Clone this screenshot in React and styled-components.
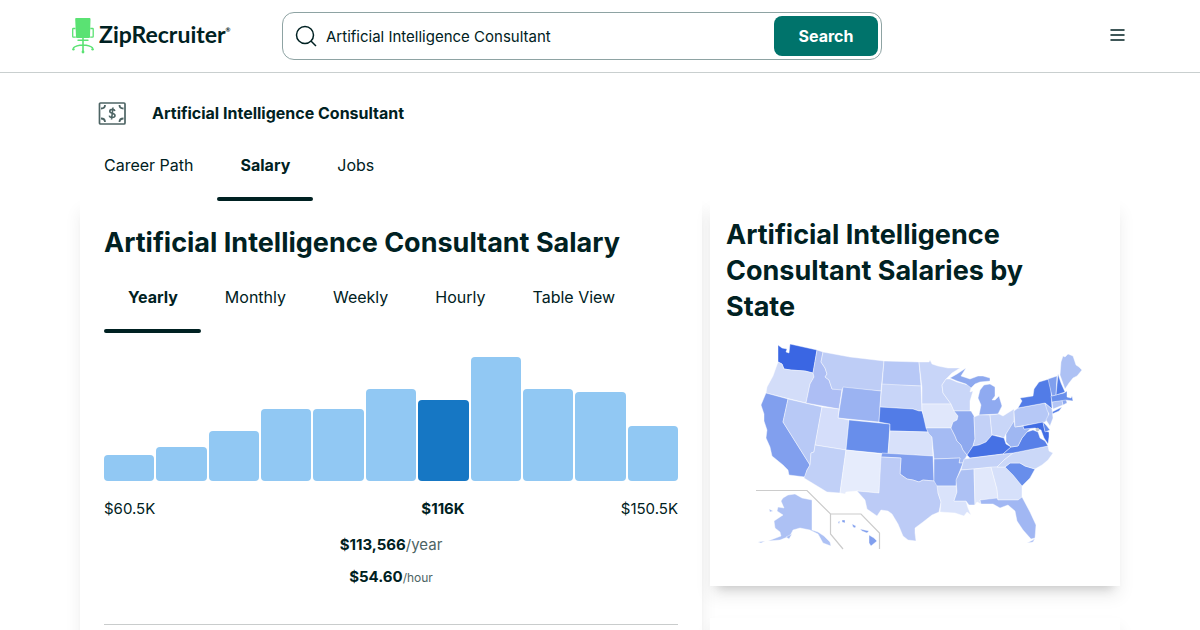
import React from "react";
import styled, { createGlobalStyle } from "styled-components";

const ink = "#002122";
const font = `Inter, "Liberation Sans", sans-serif`;

const GlobalStyle = createGlobalStyle`
  *, *::before, *::after { box-sizing: border-box; }
  body {
    margin: 0;
    background: #fff;
    color: ${ink};
    font: 400 16px/24px ${font};
  }
  h1, h2, p, ul { margin: 0; padding: 0; }
  ul { list-style: none; }
  a { color: inherit; text-decoration: none; }
  button, input { font: inherit; color: inherit; }
`;

const Header = styled.header`
  display: flex;
  align-items: center;
  height: 73px;
  padding: 0 72px;
  border-bottom: 1px solid #c9cfcf;
`;

const Logo = styled.a`
  display: flex;
  align-items: flex-start;
  gap: 5px;
  width: 210px;
  flex: none;
  svg { flex: none; }
`;

const Wordmark = styled.span`
  display: flex;
  font: 700 23px/32px Lato, ${font};
  sup { font-size: 6px; line-height: 8px; margin-top: 8px; }
`;

const SearchForm = styled.form`
  display: flex;
  align-items: center;
  flex: 0 1 600px;
  height: 48px;
  padding: 3px;
  border: 1px solid #8ea3a3;
  border-radius: 12px;
`;

const SearchLabel = styled.label`
  display: flex;
  align-items: center;
  gap: 9px;
  flex: 1;
  min-width: 0;
  padding-left: 9px;
  svg { flex: none; }
`;

const SearchInput = styled.input`
  flex: 1;
  min-width: 0;
  height: 40px;
  padding: 0;
  border: 0;
  outline: 0;
  background: none;
  font-size: 15px;
`;

const SearchButton = styled.button`
  width: 104px;
  height: 40px;
  padding: 0;
  border: 0;
  border-radius: 8px;
  background: #00736b;
  color: #fff;
  font-weight: 700;
`;

const MenuButton = styled.button`
  display: flex;
  margin-left: auto;
  padding: 0 0 2px;
  border: 0;
  background: none;
`;

const Page = styled.div`
  max-width: 1040px;
  margin: 0 auto;
`;

const SubHeader = styled.div`
  position: relative;
  z-index: 1;
  padding-top: 24px;
  background: #fff;
`;

const TopicTitle = styled.p`
  display: flex;
  align-items: center;
  gap: 26px;
  height: 32px;
  padding-left: 18px;
  font-weight: 700;
`;

const TabList = styled.ul`
  display: flex;
`;

const Tab = styled.a`
  display: block;
  position: relative;
  height: 72px;
  padding: 24px 23px 0 24px;
  font-weight: ${(p) => (p.$active ? 700 : 400)};
  &::after {
    content: "";
    position: absolute;
    left: 0;
    right: 0;
    bottom: 0;
    height: 4px;
    border-radius: 2px;
    background: ${(p) => (p.$active ? ink : "transparent")};
  }
`;

const Columns = styled.main`
  display: grid;
  grid-template-columns: minmax(0, 622fr) minmax(0, 410fr);
  gap: 8px;
`;

const Card = styled.section`
  min-height: 96px;
  padding: ${(p) => p.$pad};
  background: #fff;
  box-shadow: 0 10px 10px -8px rgba(0, 0, 0, 0.18), 0 10px 16px rgba(0, 0, 0, 0.07);
`;

const Side = styled.aside`
  display: flex;
  flex-direction: column;
  gap: 32px;
`;

const Heading = styled.h2`
  padding-right: 16px;
  font-size: 27px;
  line-height: 36px;
  font-weight: 700;
`;

const Chart = styled.div`
  display: flex;
  align-items: flex-end;
  gap: 2px;
  height: 124px;
  margin-top: 24px;
`;

const Bar = styled.div`
  flex: 1;
  border-radius: 4px;
  background: ${(p) => (p.$active ? "#1677c4" : "#91c8f3")};
`;

const Axis = styled.div`
  display: grid;
  grid-template-columns: 314px 50px 1fr;
  margin-top: 16px;
  font-size: 15px;
  strong { text-align: center; }
  span:last-child { text-align: right; }
`;

const Pay = styled.p`
  margin-top: ${(p) => p.$gap}px;
  text-align: center;
  color: #4d6464;
  font-size: ${(p) => p.$unit}px;
  line-height: 24px;
  strong { color: ${ink}; font-size: ${(p) => p.$amount}px; }
`;

const Rule = styled.hr`
  height: 1px;
  margin: 34px 0 0;
  border: 0;
  background: #c9cccc;
`;

const MapDrawing = styled.svg`
  display: block;
  width: 100%;
  margin-top: 9px;
`;

const bars = [26, 34, 50, 72, 72, 92, 81, 124, 92, 89, 55];

const states = [
  ["WA", "#3a66e3", "778,345 782,348 787,349 786,352 789,353 790,344 817,350 813,373 805,371 791,370 784,369 782,364 778,362"],
  ["OR", "#d3ddf9", "778,362 782,364 784,369 791,370 805,371 813,373 814,377 810,384 806,403 766,393 767,387 773,376"],
  ["CA", "#819fee", "766,393 788,399 783,422 810,465 807,470 805,477 789,475 788,470 783,465 772,456 770,447 766,438 767,430 764,421 764,414 761,405"],
  ["NV", "#b8c9f6", "788,399 822,407 815,446 814,452 811,453 810,465 783,422"],
  ["ID", "#adbef4", "817,350 823,352 821,362 825,368 827,374 825,377 829,380 832,389 842,389 839,409 806,403 810,384 814,377 813,373"],
  ["MT", "#becdf6", "823,352 850,357 884,361 881,391 843,388 842,390 832,389 829,380 825,377 827,374 825,368 821,362"],
  ["WY", "#9bb3f2", "843,387 881,391 879,422 838,418"],
  ["UT", "#d5defa", "822,407 839,409 838,418 849,420 846,450 815,445"],
  ["CO", "#688eeb", "849,420 890,424 888,454 846,450"],
  ["AZ", "#c1d0f7", "815,445 846,450 840,493 827,492 804,478 807,470 810,465 811,453 814,452"],
  ["NM", "#e6ecfc", "846,450 882,454 879,493 857,491 846,492 845,494 840,493"],
  ["ND", "#b7c8f6", "884,361 919,362 921,386 882,385"],
  ["SD", "#c8d5f8", "882,384 921,386 922,411 919,411 913,409 880,407"],
  ["NE", "#527ce7", "880,407 913,409 919,411 922,411 925,420 928,432 890,431 890,424 879,422"],
  ["KS", "#d8e1fa", "890,431 928,432 932,437 933,456 888,454"],
  ["OK", "#819fee", "882,453 933,456 934,481 923,480 919,482 913,480 907,479 900,474 901,458 881,457"],
  ["TX", "#bccbf6", "881,457 901,458 900,474 907,479 913,480 919,482 923,480 934,481 938,483 938,493 941,502 939,512 932,515 923,522 915,528 915,533 916,541 908,540 903,536 898,524 892,514 888,511 881,510 877,516 867,509 865,500 857,491 879,493"],
  ["MN", "#c8d5f8", "919,362 929,362 930,360 932,364 938,366 948,368 960,368 952,373 946,379 942,385 943,393 951,404 922,404 922,388"],
  ["IA", "#e0e7fb", "922,404 951,404 954,411 958,416 957,420 953,422 951,428 926,428 922,410"],
  ["MO", "#a5bbf3", "926,428 951,428 955,436 957,441 961,445 963,450 967,455 963,463 959,463 960,458 934,459 932,437 929,434"],
  ["AR", "#8da9f0", "934,459 960,458 959,463 963,463 957,478 956,486 937,486 934,481"],
  ["LA", "#dae3fb", "937,486 956,486 957,492 954,501 966,501 968,508 971,515 967,512 964,516 955,513 940,512 941,502 938,493"],
  ["WI", "#c9d6f8", "946,379 950,379 957,382 968,385 971,388 970,392 973,391 970,401 970,411 954,411 951,404 943,393 942,385"],
  ["IL", "#8ea9ef", "954,411 971,411 974,416 975,439 973,446 967,455 963,450 961,445 957,441 955,436 951,428 953,422 957,420 958,416"],
  ["MIU", "#8ea9ef", "950,378 957,374 966,368 961,376 970,379 978,376 983,376 990,378 990,381 980,382 975,384 971,388 966,384 957,381"],
  ["MI", "#8faaf0", "984,385 990,384 995,387 995,396 992,400 995,400 999,396 1002,406 998,414 979,415 981,405 978,398 980,390"],
  ["IN", "#c3d1f7", "974,417 979,415 990,415 992,435 986,442 979,445 973,446 975,439"],
  ["OH", "#c9d6f8", "990,415 999,414 1003,416 1014,409 1014,422 1006,434 1004,438 999,436 992,435"],
  ["KY", "#4671e4", "967,455 973,446 979,445 986,442 992,435 1004,438 1006,444 1011,447 1003,454 970,458"],
  ["TN", "#c4d2f7", "964,459 1003,454 1013,453 1004,460 997,467 961,470"],
  ["MS", "#adc1f4", "961,470 974,469 975,505 969,505 966,501 954,501 957,492 956,480"],
  ["AL", "#e1e8fb", "974,469 991,467 997,489 998,499 980,500 981,504 977,502 975,505"],
  ["GA", "#d6e0fa", "991,467 1005,467 1013,475 1022,486 1022,498 1018,500 998,500 997,489"],
  ["FL", "#a1b7f3", "980,500 997,498 998,500 1018,500 1022,497 1030,512 1036,525 1035,538 1031,539 1023,530 1017,521 1015,511 1008,505 1000,508 993,504 981,504"],
  ["FLK", "#a1b7f3", "1027,543 1033,540 1035,538 1033,542"],
  ["SC", "#688eeb", "1005,467 1010,463 1020,463 1025,466 1035,469 1030,478 1022,486 1013,475"],
  ["NC", "#cbd8f8", "1013,453 1048,446 1049,451 1053,453 1048,460 1042,465 1035,469 1025,466 1020,463 1010,463 1005,467 997,467 1004,460"],
  ["VA", "#5880e8", "1003,454 1011,447 1018,446 1022,438 1027,432 1033,430 1038,432 1040,438 1045,441 1048,446 1013,453"],
  ["WV", "#9fb7f2", "1014,421 1015,427 1023,426 1024,429 1031,428 1027,432 1022,438 1018,446 1011,447 1006,442 1006,434"],
  ["PA", "#b6c8f6", "1014,411 1018,408 1045,403 1048,410 1049,417 1045,422 1015,427"],
  ["NY", "#527ce7", "1018,408 1022,401 1020,398 1033,396 1034,389 1039,382 1049,379 1051,390 1052,409 1045,403"],
  ["LI", "#527ce7", "1052,412 1062,407 1059,411 1052,414"],
  ["NJ", "#b4c6f5", "1045,403 1052,409 1053,418 1050,426 1046,420 1049,414 1047,410"],
  ["MD", "#416de4", "1023,426 1043,422 1045,431 1049,432 1049,437 1048,444 1044,438 1041,430 1035,428 1024,429"],
  ["DE", "#6188e9", "1043,422 1046,425 1050,430 1045,432"],
  ["CT", "#b3c5f5", "1052,402 1062,400 1063,405 1053,409"],
  ["RI", "#8ca8ef", "1062,400 1066,399 1067,403 1063,405"],
  ["MA", "#688eeb", "1051,396 1064,393 1067,391 1067,397 1071,398 1072,396 1073,401 1066,400 1052,402"],
  ["VT", "#809fee", "1048,379 1057,376 1056,395 1052,396"],
  ["NH", "#527ce7", "1058,374 1061,383 1065,392 1056,395"],
  ["ME", "#adc1f4", "1060,375 1061,362 1063,356 1065,357 1068,354 1073,356 1076,365 1079,367 1082,370 1077,376 1073,378 1069,383 1065,389"],
  ["AK", "#adc1f4", "783,498 788,495 795,494 802,498 812,500 812,530 818,532 824,536 830,542 831,546 823,543 818,534 810,530 800,528 793,530 790,536 780,540 768,541 781,536 780,532 775,528 774,521 783,515 777,511 778,507 784,508 781,501"],
  ["AK2", "#a5bbf3", "758,542 765,541 761,543"],
  ["AK3", "#a5bbf3", "769,509 773,511 770,512"],
  ["AK4", "#a5bbf3", "786,537 792,534 789,539"],
  ["HI1", "#819fee", "838,522 840,521 839,524"],
  ["HI2", "#819fee", "842,520 845,520 845,523 842,522"],
  ["HI3", "#819fee", "852,524 856,526 855,528 853,527"],
  ["HI4", "#819fee", "860,529 869,531 867,533 862,531"],
  ["HI5", "#819fee", "869,535 874,538 877,541 871,546 869,543"],
];

const mainTabs = ["Career Path", "Salary", "Jobs"];
const periodTabs = ["Yearly", "Monthly", "Weekly", "Hourly", "Table View"];

function Tabs({ items, active }) {
  return (
    <TabList>
      {items.map((t) => (
        <li key={t}>
          <Tab href="#" $active={t === active}>
            {t}
          </Tab>
        </li>
      ))}
    </TabList>
  );
}

function ChairIcon() {
  return (
    <svg width="22" height="36" viewBox="0 0 22 36" fill="none" stroke="#5ae273" aria-hidden="true">
      <path d="M4.300 0h13c.8 0 1.200.4 1.200 1.200L18 18.800c0 .8-.4 1.200-1.200 1.200H5.200C4.400 20 4 19.600 4 18.800L3.200 1.200C3.200.4 3.500 0 4.300 0Z" fill="#5ae273" stroke="none" />
      <path d="M3.500 10.500H1.200c-.4 0-.5.2-.5.600v7.400c0 .4.300.6.700.6h2.400M18.300 10.500h2.300c.4 0 .6.200.6.600v7.400c0 .4-.3.600-.7.600h-2.300" strokeWidth="1.300" />
      <path d="M6 22.200h10" strokeWidth="1.400" strokeLinecap="round" />
      <path d="M11 20v13M11 27c-4 .1-7.500.8-9.800 3M11 27c4 .1 7.500.8 9.800 3" strokeWidth="1.600" />
      <circle cx="1.400" cy="31.200" r="1.200" fill="#5ae273" stroke="none" />
      <circle cx="20.600" cy="31.200" r="1.200" fill="#5ae273" stroke="none" />
      <circle cx="11" cy="34" r="1.400" fill="#5ae273" stroke="none" />
    </svg>
  );
}

function MoneyIcon() {
  return (
    <svg width="28" height="24" viewBox="0 0 28 24" fill="none" stroke="#4d6464" strokeWidth="1.700" aria-hidden="true">
      <rect x="1.500" y="2" width="25.500" height="21" rx="1" />
      <path d="M3 7.500c2.500 0 4-1.300 4-3.500M25.500 7.500c-2.500 0-4-1.300-4-3.500M3 17.500c2.500 0 4 1.300 4 3.500M25.500 17.500c-2.500 0-4 1.300-4 3.500" strokeWidth="1.800" />
      <path d="M16.900 10c-.3-1.100-1.200-1.600-2.600-1.600-1.500 0-2.500.7-2.500 1.900 0 2.800 5.200 1.300 5.200 4.200 0 1.300-1.100 2-2.800 2-1.500 0-2.600-.6-2.900-1.900M15 6.500l-1.500 12" strokeWidth="1.600" />
    </svg>
  );
}

export default function App() {
  return (
    <>
      <GlobalStyle />
      <Header>
        <Logo href="#">
          <ChairIcon />
          <Wordmark>
            ZipRecruiter<sup>®</sup>
          </Wordmark>
        </Logo>
        <SearchForm onSubmit={(e) => e.preventDefault()}>
          <SearchLabel>
            <svg width="22" height="22" viewBox="0 0 22 22" fill="none" stroke={ink} strokeWidth="1.500" aria-hidden="true">
              <circle cx="10" cy="10" r="8.500" />
              <path d="m16 16 5 5" />
            </svg>
            <SearchInput aria-label="Search jobs" defaultValue="Artificial Intelligence Consultant" />
          </SearchLabel>
          <SearchButton type="submit">Search</SearchButton>
        </SearchForm>
        <MenuButton type="button" aria-label="Menu">
          <svg width="20" height="20" viewBox="0 0 20 20" stroke={ink} strokeWidth="1.500" strokeLinecap="round">
            <path d="M3 5h13M3 10h13M3 15h13" />
          </svg>
        </MenuButton>
      </Header>
      <Page>
        <SubHeader>
          <TopicTitle>
            <MoneyIcon />
            Artificial Intelligence Consultant
          </TopicTitle>
          <Tabs items={mainTabs} active="Salary" />
        </SubHeader>
        <Columns>
          <Card $pad="24px">
            <Heading as="h1">Artificial Intelligence Consultant Salary</Heading>
            <Tabs items={periodTabs} active="Yearly" />
            <Chart>
              {bars.map((h, i) => (
                <Bar key={i} $active={i === 6} style={{ height: h }} />
              ))}
            </Chart>
            <Axis>
              <span>$60.5K</span>
              <strong>$116K</strong>
              <span>$150.5K</span>
            </Axis>
            <Pay $gap={12} $amount={15} $unit={15}>
              <strong>$113,566</strong>/year
            </Pay>
            <Pay $gap={8} $amount={15} $unit={12}>
              <strong>$54.60</strong>/hour
            </Pay>
            <Rule />
          </Card>
          <Side>
            <Card $pad="16px 16px 32px">
              <Heading>Artificial Intelligence Consultant Salaries by State</Heading>
              <MapDrawing viewBox="726 334 378 220" role="img" aria-label="Salaries by state">
                <g stroke="#fff" strokeOpacity="0.6" strokeWidth="0.700" strokeLinejoin="round">
                  {states.map(([id, fill, points]) => (
                    <polygon key={id} fill={fill} points={points} />
                  ))}
                </g>
                <circle cx="1037.500" cy="429.500" r="1.800" fill="#c4c9d0" />
                <path d="M756 490.500h51L830.500 514H861l18.500 19v16M830.500 514v20l12.500 15" fill="none" stroke="#ccc" strokeWidth="1.200" />
              </MapDrawing>
            </Card>
            <Card $pad="16px" />
          </Side>
        </Columns>
      </Page>
    </>
  );
}
